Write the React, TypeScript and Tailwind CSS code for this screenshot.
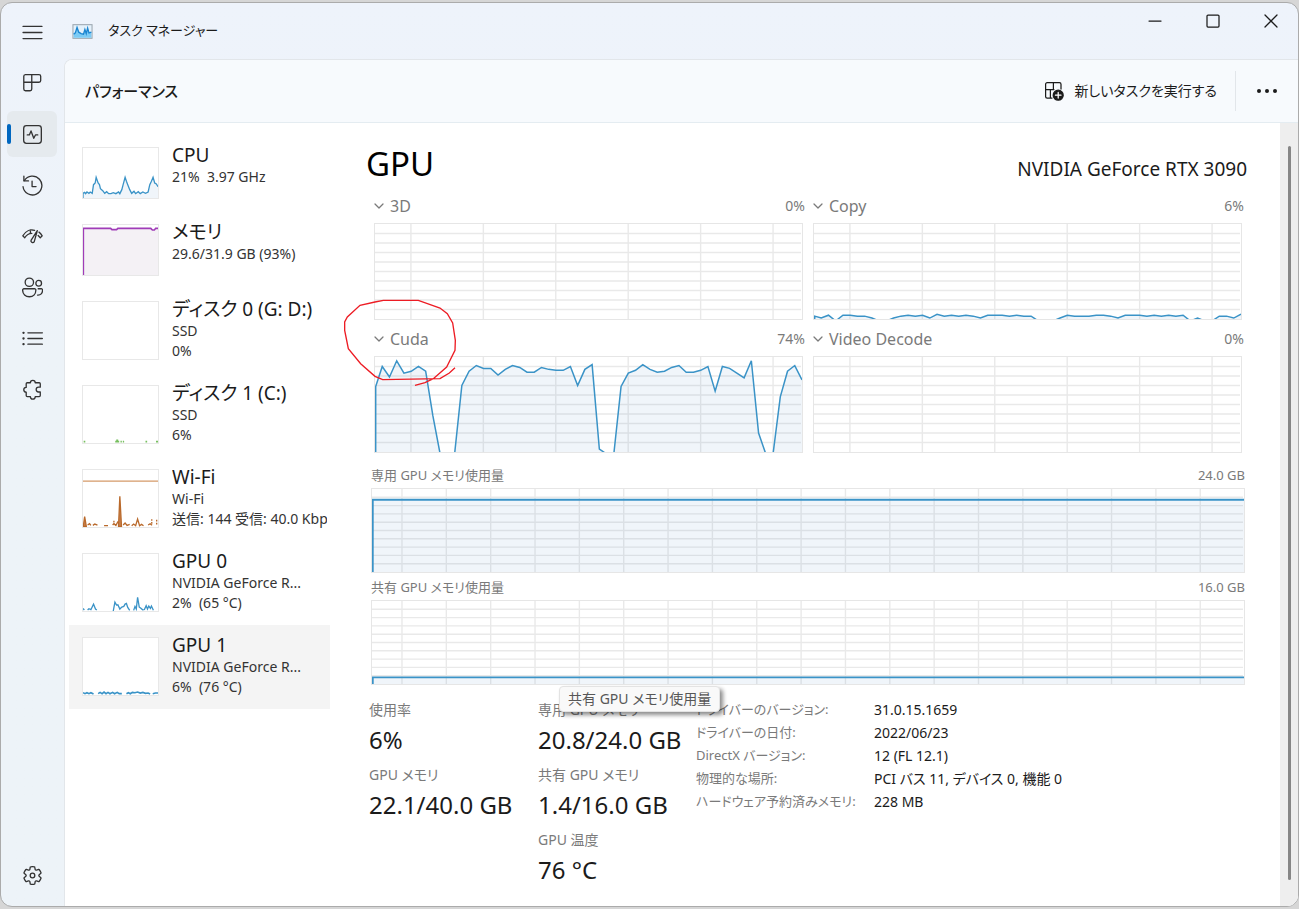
import type { ReactNode } from "react";

const stroke = {
  fill: "none",
  stroke: "currentColor",
  strokeWidth: 1.25,
  strokeLinecap: "round" as const,
  strokeLinejoin: "round" as const,
};

const Icon = ({ children }: { children: ReactNode }) => (
  <svg viewBox="0 0 20 20" className="size-[21px]" aria-hidden="true" {...stroke}>
    {children}
  </svg>
);

const navItems = [
  {
    label: "プロセス",
    icon: (
      <path d="M3.2 1.6H16.2a1.6 1.6 0 0 1 1.6 1.6V7.2a1.6 1.6 0 0 1-1.6 1.6H1.7V3.2A1.6 1.6 0 0 1 3.2 1.6ZM1.7 8.8V15.3a1.6 1.6 0 0 0 1.6 1.6H7.7a1.6 1.6 0 0 0 1.6-1.6V1.6" />
    ),
  },
  {
    label: "パフォーマンス",
    icon: (
      <>
        <rect x="1.6" y="1.6" width="16.8" height="16.8" rx="2.6" />
        <path d="M5 10.4H7L8.6 6.6 11.2 13.6 12.8 10.4H15" />
      </>
    ),
  },
  {
    label: "アプリの履歴",
    icon: (
      <>
        <path d="M1.8 1.2V5.6H6.2" />
        <path d="M2.2 5.4A9 9 0 1 1 1 11.2" />
        <path d="M9.6 5.8V11H13.4" />
      </>
    ),
  },
  {
    label: "スタートアップ アプリ",
    icon: (
      <>
        <path d="M0.8 9.4C3.4 4.6 8 3 12 4.2M0.8 9.4 2.6 11.2C4.2 8.6 6.8 7 9.4 7M8 3.8V6.4M19.2 9.4 17.4 11.2 15.4 9M19.2 9.4C18.4 7.8 17.4 6.6 16.2 5.8" />
        <path d="M14.6 4.4 8.6 13.6a1.7 1.7 0 0 0 3 1.5Z" />
      </>
    ),
  },
  {
    label: "ユーザー",
    icon: (
      <>
        <circle cx="7" cy="5" r="4" />
        <circle cx="15.9" cy="6" r="2.7" />
        <path d="M1.8 11.2H12a1.2 1.2 0 0 1 1.2 1.2C13.2 16.4 10.6 18.8 7 18.8S.6 16.4.6 12.4a1.2 1.2 0 0 1 1.2-1.2Z" />
        <path d="M15.4 11.2H18.4a1.2 1.2 0 0 1 1.2 1.2C19.6 15.6 17.8 17.4 14.8 17.2" />
      </>
    ),
  },
  {
    label: "詳細",
    icon: (
      <>
        <path d="M5.6 4.6H19.4M5.6 10H19.4M5.6 15.4H19.4" />
        <path d="M1.4 4.6H1.5M1.4 10H1.5M1.4 15.4H1.5" strokeWidth="2.2" />
      </>
    ),
  },
  {
    label: "サービス",
    icon: (
      <path d="M8 3.6a2.3 2.3 0 0 1 4.6 0H16.4a1 1 0 0 1 1 1V7.8H15.8a2.2 2.2 0 0 0 0 4.6H17.4V15.8a1 1 0 0 1-1 1H12.6a2.3 2.3 0 0 1-4.6 0H5a1 1 0 0 1-1-1V12.6a2.3 2.3 0 0 1 0-4.6V4.6a1 1 0 0 1 1-1Z" />
    ),
  },
];

const NavButton = ({ label, active, children }: { label: string; active?: boolean; children: ReactNode }) => (
  <button
    aria-label={label}
    className={
      active
        ? "relative flex h-[46px] w-[50px] items-center justify-center rounded-md bg-[#e5eaee]"
        : "relative flex h-[46px] w-[50px] items-center justify-center rounded-md"
    }
  >
    {active && <span className="absolute left-0 h-5 w-1 rounded-full bg-[#0067c0]" />}
    <Icon>{children}</Icon>
  </button>
);

type Resource = {
  name: string;
  lines: string[];
  height: 150 | 174;
  graph?: ReactNode;
  active?: boolean;
};

const BLUE = "#3a93c7";
const cpuLine =
  "0,136 5,133 8,137 12,132 18,136 22,132 28,136 32,110 37,105 40,88 46,105 50,110 53,122 60,128 66,136 72,131 78,137 85,137 92,134 100,137 108,132 112,137 118,125 122,110 128,88 132,100 136,110 142,125 148,136 155,130 160,137 168,131 174,137 182,132 190,136 198,132 203,110 208,100 213,88 218,105 223,108 228,116";
const memLine = "1,150 1,10 84,10 88,14 102,14 106,10 206,10 211,15 217,15 221,10 228,10";

const resources: Resource[] = [
  {
    name: "CPU",
    lines: ["21%  3.97 GHz"],
    height: 150,
    graph: (
      <>
        <polygon points={"0,150 " + cpuLine + " 228,150"} fill="#f0f5fa" />
        <polyline points={"0,150 " + cpuLine} fill="none" stroke={BLUE} strokeWidth="4" />
      </>
    ),
  },
  {
    name: "メモリ",
    lines: ["29.6/31.9 GB (93%)"],
    height: 150,
    graph: (
      <>
        <polygon points={memLine + " 228,150"} fill="#f4f1f5" />
        <polyline points={memLine} fill="none" stroke="#a03cb8" strokeWidth="5" />
      </>
    ),
  },
  { name: "ディスク 0 (G: D:)", lines: ["SSD", "0%"], height: 174 },
  {
    name: "ディスク 1 (C:)",
    lines: ["SSD", "6%"],
    height: 174,
    graph: (
      <path
        d="M2 170H7M98 170H110M101 166H107M114 170H118M121 170H125M190 170H195M222 170H228"
        stroke="#77bf5f"
        strokeWidth="5"
      />
    ),
  },
  {
    name: "Wi-Fi",
    lines: ["Wi-Fi", "送信: 144 受信: 40.0 Kbps"],
    height: 174,
    graph: (
      <g fill="none" stroke="#b9692b" strokeWidth="4">
        <path d="M0 34H228" stroke="#d59a69" />
        <path d="M1 172 5 142 10 172ZM108 172 112 80 117 172Z" fill="#c98350" />
        <path d="M14 168 20 164 24 169M30 169 36 165 44 168M64 170H76M90 168 94 164 100 169 106 158M122 168 128 162 134 169 142 166M148 170 154 165 160 170 166 150 172 170 178 166 184 170M198 168 204 164 210 169" />
        <path d="M94 155V166M105 157 108 164M209 150V166M224 152V166" strokeDasharray="5 4" />
      </g>
    ),
  },
  {
    name: "GPU 0",
    lines: ["NVIDIA GeForce R...", "2%  (65 °C)"],
    height: 174,
    graph: (
      <path
        d="M0 166 4 171M14 171 18 167 24 170 32 153 38 168 42 171M92 174 97 147 102 156 106 155 112 168 118 162 124 160 128 153 132 151 136 163 142 172M154 172 158 160 162 168 166 132 171 162 175 165 180 169 184 172M186 171 192 158 196 168 200 159 205 166 208 159 214 172"
        fill="none"
        stroke={BLUE}
        strokeWidth="4"
      />
    ),
  },
  {
    name: "GPU 1",
    lines: ["NVIDIA GeForce R...", "6%  (76 °C)"],
    height: 174,
    active: true,
    graph: (
      <path
        d="M0 167 6 170 12 167 18 170 24 167 32 171M46 170 52 166 58 170 64 165 70 170 76 166 82 170 90 166 96 170 104 166 110 170 118 170M132 170 138 167 144 170 150 166 158 167 166 165 174 168 182 166 190 169 198 168 204 171M212 170 220 168 228 168"
        fill="none"
        stroke={BLUE}
        strokeWidth="5"
      />
    ),
  },
];

const ResourceItem = ({ name, lines, height, graph, active }: Resource) => (
  <button
    className={
      active
        ? "flex w-[261px] items-start bg-[#f4f4f4] py-3 pl-[13px] text-left"
        : "flex w-[261px] items-start py-3 pl-[13px] text-left"
    }
  >
    <svg
      viewBox={`0 0 228 ${height}`}
      preserveAspectRatio="none"
      aria-hidden="true"
      className={
        height === 150
          ? "mb-px h-[52px] w-[77px] shrink-0 border border-[#e8e8e8] bg-white"
          : "mb-px h-[59px] w-[77px] shrink-0 border border-[#e8e8e8] bg-white"
      }
    >
      {graph}
    </svg>
    <span className="-mt-1 ml-[13px] block w-[155px] shrink-0 overflow-hidden whitespace-pre">
      <span className="block text-[19px] leading-6">{name}</span>
      {lines.map((line) => (
        <span key={line} className="block text-sm leading-5 text-[#333]">
          {line}
        </span>
      ))}
    </span>
  </button>
);

const cuda = [
  69, 90, 79, 96, 83, 85, 90, 85, 38, 0, 0, 0, 70, 85, 91, 88, 88, 81, 87, 91, 89, 84, 84, 89, 87, 86, 86, 90, 70, 87,
  92, 3, 0, 0, 69, 83, 86, 92, 87, 84, 85, 89, 91, 84, 84, 86, 90, 64, 90, 88, 83, 78, 96, 20, 0, 0, 58, 85, 91, 76,
];
const copy = [
  3, 1, 4, 0, 4, 4, 3, 3, 1, 0, 0, 1, 3, 4, 3, 4, 1, 5, 3, 4, 3, 4, 3, 1, 4, 4, 4, 3, 4, 3, 3, 0, 0, 0, 1, 4, 3, 3, 3,
  4, 4, 3, 1, 4, 4, 4, 3, 4, 3, 4, 3, 4, 0, 1, 0, 0, 3, 3, 1, 5,
];

type ChartProps = {
  label: string;
  values?: number[];
  width: number;
  height: number;
  firstLine: number;
  lineStep: number;
  lineWidth?: number;
};

const Chart = ({ label, values, width, height, firstLine, lineStep, lineWidth = 1.5 }: ChartProps) => {
  const columns: number[] = [];
  for (let x = firstLine; x < width; x += lineStep) columns.push(x);
  const points = (values ?? [])
    .map((v, i, all) => {
      const x = Math.max(0.7, (i * width) / (all.length - 1));
      return `${x},${v === 0 ? height + 2 : height - (v * height) / 100}`;
    })
    .join(" ");

  return (
    <svg
      role="img"
      aria-label={label}
      viewBox={`0 0 ${width} ${height}`}
      preserveAspectRatio="none"
      className={
        height === 97
          ? "block h-[97px] w-full border border-[#e6e6e6]"
          : "block h-[85px] w-full border border-[#e6e6e6]"
      }
    >
      <g stroke="#e9e9e9" strokeWidth="1.4">
        {columns.map((x) => (
          <line key={x} x1={x} x2={x} y1="0" y2={height} />
        ))}
        {[1, 2, 3, 4, 5, 6, 7, 8, 9].map((n) => (
          <line key={n} x1="0" x2={width - 1} y1={(n * height) / 10} y2={(n * height) / 10} />
        ))}
      </g>
      {values && (
        <>
          <polygon points={`0,${height} ${points} ${width},${height}`} fill="#1c6cb0" fillOpacity="0.065" />
          <polyline points={`0.7,${height} ${points}`} fill="none" stroke={BLUE} strokeWidth={lineWidth} />
        </>
      )}
    </svg>
  );
};

const EngineChart = ({ name, usage, values, children }: { name: string; usage: string; values?: number[]; children?: ReactNode }) => (
  <section className="relative">
    <div className="flex h-9 items-center justify-between pt-[2px] text-[#7a7a7a]">
      <button className="flex items-center gap-[6px] text-base">
        <svg viewBox="0 0 10 10" className="size-[10px]" aria-hidden="true" {...stroke}>
          <path d="M1 3 5 7 9 3" />
        </svg>
        {name}
      </button>
      <span className="text-sm">{usage}</span>
    </div>
    <div className="mr-[2px]">
      <Chart label={name} values={values} width={428} height={97} firstLine={36} lineStep={72.6} />
    </div>
    {children}
  </section>
);

const MemoryChart = ({ name, max, value, children }: { name: string; max: string; value: number; children?: ReactNode }) => (
  <section className="relative ml-[5px] mr-[2px]">
    <div className="flex h-6 items-center justify-between text-[13px] text-[#7a7a7a]">
      <h3>{name}</h3>
      <span>{max}</span>
    </div>
    <Chart label={name} values={[value, value]} width={873} height={85} firstLine={30} lineStep={44.4} lineWidth={2} />
    {children}
  </section>
);

const Stat = ({ label, value }: { label: string; value: string }) => (
  <div className="mb-[5px]">
    <dt className="text-sm leading-6 text-[#7a7a7a]">{label}</dt>
    <dd className="text-2xl leading-9">{value}</dd>
  </div>
);

const details = [
  ["ドライバーのバージョン:", "31.0.15.1659"],
  ["ドライバーの日付:", "2022/06/23"],
  ["DirectX バージョン:", "12 (FL 12.1)"],
  ["物理的な場所:", "PCI バス 11, デバイス 0, 機能 0"],
  ["ハードウェア予約済みメモリ:", "228 MB"],
];

const App = () => {
  return (
    <div className="flex min-h-screen bg-[#d6d6d6] pb-[2px] pt-[2px] font-['Noto_Sans','Noto_Sans_CJK_JP',sans-serif] text-[#1b1b1b] [font-feature-settings:'palt']">
      <div className="flex flex-1 overflow-hidden rounded-xl border border-[#ababab] bg-linear-to-b from-[#eef3fb] to-[#edf3f8] to-40%">
        {/* Navigation rail */}
        <nav className="flex w-[63px] shrink-0 flex-col gap-[5px] pb-2 pl-[6px] pt-[6px] text-[#333]">
          <NavButton label="ナビゲーション">
            <path d="M1 4.2H19M1 10H19M1 15.8H19" />
          </NavButton>
          {navItems.map((item) => (
            <NavButton key={item.label} label={item.label} active={item.label === "パフォーマンス"}>
              {item.icon}
            </NavButton>
          ))}
          <div className="mt-auto">
            <NavButton label="設定">
              <circle cx="10" cy="10" r="2.2" />
              <path d="M1.91 7.38A8.5 8.5 0 0 1 3.7 4.3a.5.5 0 0 1 .54-.13l1.92.68a1 1 0 0 0 1.32-.76l.36-2a.5.5 0 0 1 .4-.4 8.53 8.53 0 0 1 3.55 0c.2.04.35.2.38.4l.37 2a1 1 0 0 0 1.32.76l1.92-.68a.5.5 0 0 1 .54.13 8.5 8.5 0 0 1 1.78 3.08c.06.2 0 .4-.15.54l-1.56 1.32a1 1 0 0 0 0 1.52l1.56 1.32a.5.5 0 0 1 .15.54 8.5 8.5 0 0 1-1.78 3.08.5.5 0 0 1-.54.13l-1.92-.68a1 1 0 0 0-1.32.76l-.37 2a.5.5 0 0 1-.38.4 8.53 8.53 0 0 1-3.56 0 .5.5 0 0 1-.39-.4l-.36-2a1 1 0 0 0-1.32-.76l-1.92.68a.5.5 0 0 1-.54-.13 8.5 8.5 0 0 1-1.78-3.08.5.5 0 0 1 .15-.54l1.56-1.32a1 1 0 0 0 0-1.52L2.06 7.92a.5.5 0 0 1-.15-.54Z" />
            </NavButton>
          </div>
        </nav>

        <div className="flex min-w-0 flex-1 flex-col">
          {/* Title bar */}
          <header className="flex h-14 shrink-0 items-start justify-between pl-2">
            <div className="flex h-14 items-center gap-[15px]">
              <svg viewBox="0 0 60 44" className="h-[15px] w-[21px]" aria-hidden="true">
                <rect x="2" y="2" width="56" height="40" fill="#e4f1fb" stroke="#9aa5ae" strokeWidth="3" />
                <path d="M4 40V30L9 26 14 10 19 24 26 28 33 30 37 16 41 28 45 12 49 26 56 24V40Z" fill="#7ccbf5" />
                <path d="M4 30 9 26 14 10 19 24 26 28 33 30 37 16 41 28 45 12 49 26 56 24" fill="none" stroke="#1c86d1" strokeWidth="4" />
              </svg>
              <h1 className="text-[13px]">タスク マネージャー</h1>
            </div>
            <div className="mr-1 flex gap-3">
              <button aria-label="最小化" className="flex h-9 w-[46px] items-center justify-center">
                <svg viewBox="0 0 14 14" className="size-[14px]" {...stroke}>
                  <path d="M1 7H13" />
                </svg>
              </button>
              <button aria-label="最大化" className="flex h-9 w-[46px] items-center justify-center">
                <svg viewBox="0 0 14 14" className="size-[14px]" {...stroke}>
                  <rect x="1" y="1" width="12" height="12" rx="1" />
                </svg>
              </button>
              <button aria-label="閉じる" className="flex h-9 w-[46px] items-center justify-center">
                <svg viewBox="0 0 14 14" className="size-[14px]" {...stroke}>
                  <path d="M1 1 13 13M13 1 1 13" />
                </svg>
              </button>
            </div>
          </header>

          <main className="flex flex-1 flex-col overflow-hidden rounded-tl-lg border-l border-t border-[#e2e6ea] bg-white">
            {/* Command bar */}
            <div className="flex h-[63px] shrink-0 items-center justify-between border-b border-[#e4ecf1] bg-[#f7fafd] pl-5 pr-[10px]">
              <h2 className="text-[15px] font-medium">パフォーマンス</h2>
              <div className="flex items-center">
                <button className="flex items-center gap-[10px] pr-[18px] text-sm">
                  <svg viewBox="0 0 20 20" className="size-5" aria-hidden="true" {...stroke}>
                    <path d="M8 17H3.2A1.6 1.6 0 0 1 1.6 15.4V3.2A1.6 1.6 0 0 1 3.2 1.6H15.4A1.6 1.6 0 0 1 17 3.2V8M9.4 1.6V8.6M1.6 8.6H10M6.4 8.6V17" />
                    <circle cx="14.2" cy="14.2" r="5" fill="currentColor" />
                    <path d="M14.2 11.4V17M11.4 14.2H17" stroke="#fff" />
                  </svg>
                  新しいタスクを実行する
                </button>
                <span className="h-10 w-px bg-[#e2e6ea]" />
                <button aria-label="その他" className="ml-[10px] flex h-10 w-[42px] items-center justify-center">
                  <svg viewBox="0 0 22 6" className="h-[6px] w-[22px]" fill="currentColor">
                    <circle cx="3" cy="3" r="2" />
                    <circle cx="11" cy="3" r="2" />
                    <circle cx="19" cy="3" r="2" />
                  </svg>
                </button>
              </div>
            </div>

            <div className="flex flex-1">
              {/* Resource list */}
              <aside className="ml-1 flex w-[270px] shrink-0 flex-col pt-3">
                {resources.map((resource) => (
                  <ResourceItem key={resource.name} {...resource} />
                ))}
              </aside>

              {/* GPU details */}
              <div className="min-w-0 flex-1 pl-[27px] pr-[33px]">
                <div className="flex h-16 items-baseline justify-between pt-[17px]">
                  <h2 className="text-[33px] leading-[48px] text-black">GPU</h2>
                  <span className="text-[19px]">NVIDIA GeForce RTX 3090</span>
                </div>

                <div className="ml-2 mr-[3px] grid grid-cols-2 gap-x-2">
                  <EngineChart name="3D" usage="0%" />
                  <EngineChart name="Copy" usage="6%" values={copy} />
                  <EngineChart name="Cuda" usage="74%" values={cuda}>
                    <svg viewBox="0 500 360 279" className="pointer-events-none absolute -left-[34px] -top-[23px] z-10 h-[93px] w-[120px]" aria-hidden="true">
                      <path
                        d="M345 712 328 728 300 745 128 748 105 738 62 700 25 655 18 620 14 600V575L22 560 60 525 105 515 130 510H235L300 533 322 550 338 578 346 630 345 660 320 710 280 745 255 757 225 765"
                        fill="none"
                        stroke="#ed1c24"
                        strokeWidth="4"
                      />
                    </svg>
                  </EngineChart>
                  <EngineChart name="Video Decode" usage="0%" />
                </div>

                <div className="mt-[11px] flex flex-col gap-[3px]">
                  <MemoryChart name="専用 GPU メモリ使用量" max="24.0 GB" value={87} />
                  <MemoryChart name="共有 GPU メモリ使用量" max="16.0 GB" value={8}>
                    <div
                      role="tooltip"
                      className="absolute left-[188px] top-[110px] z-10 whitespace-nowrap rounded border border-[#e3e3e3] bg-[#f9f9f9] px-2 text-sm leading-6 text-[#575757] shadow-[3px_3px_4px_rgba(0,0,0,0.45)]"
                    >
                      共有 GPU メモリ使用量
                    </div>
                  </MemoryChart>
                </div>

                <div className="ml-[3px] mt-[13px] flex">
                  <dl className="w-[169px] shrink-0">
                    <Stat label="使用率" value="6%" />
                    <Stat label="GPU メモリ" value="22.1/40.0 GB" />
                  </dl>
                  <dl className="w-[158px] shrink-0 whitespace-nowrap">
                    <Stat label="専用 GPU メモリ" value="20.8/24.0 GB" />
                    <Stat label="共有 GPU メモリ" value="1.4/16.0 GB" />
                    <Stat label="GPU 温度" value="76 °C" />
                  </dl>
                  <table className="self-start whitespace-nowrap text-left text-sm leading-[23px]">
                    <tbody>
                      {details.map(([label, value]) => (
                        <tr key={label}>
                          <th scope="row" className="w-[178px] p-0 text-[13px] font-normal text-[#7a7a7a]">
                            {label}
                          </th>
                          <td className="p-0">{value}</td>
                        </tr>
                      ))}
                    </tbody>
                  </table>
                </div>
              </div>

              {/* Scrollbar */}
              <div className="flex w-[18px] shrink-0 justify-center bg-[#eeeeee] pb-[26px] pt-[23px]">
                <div className="w-[3px] rounded-full bg-[#868686]" />
              </div>
            </div>
          </main>
        </div>
      </div>
    </div>
  );
};

export default App;
